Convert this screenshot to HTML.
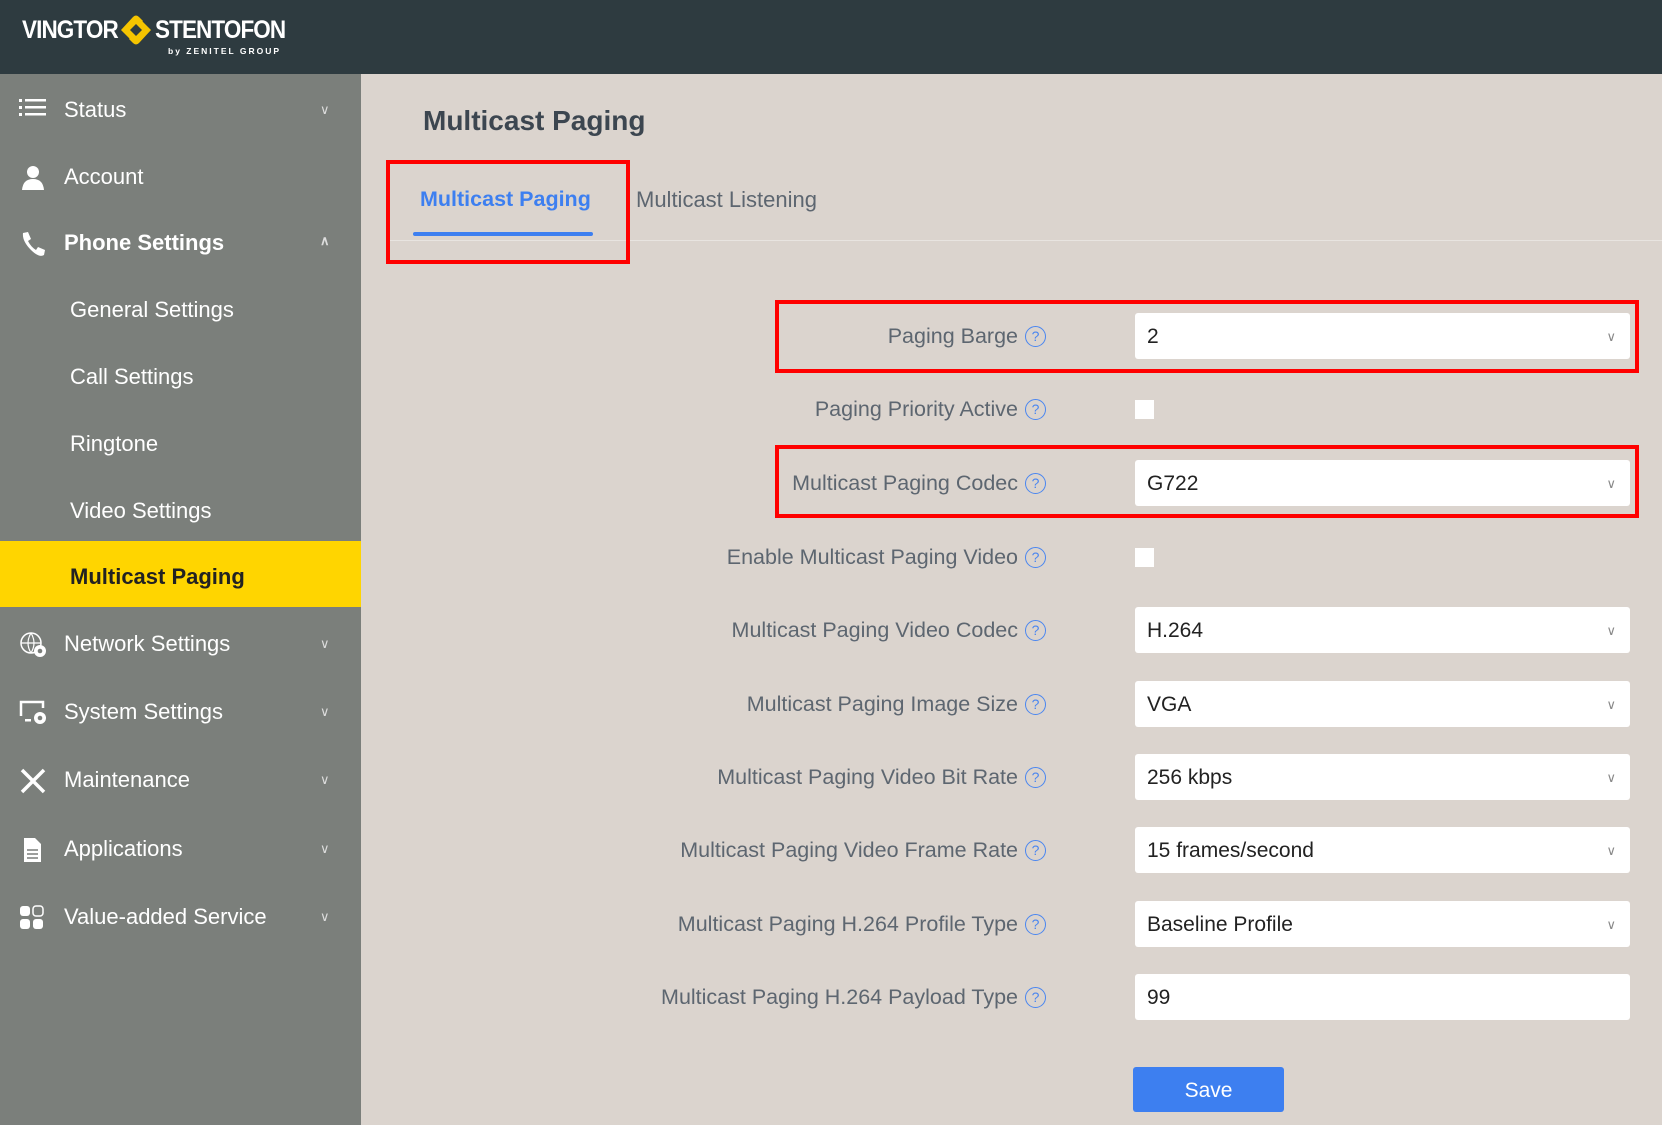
<!DOCTYPE html>
<html><head><meta charset="utf-8"><style>
*{margin:0;padding:0;box-sizing:border-box}
body{width:1662px;height:1125px;overflow:hidden;background:#dbd4ce;font-family:"Liberation Sans",sans-serif;position:relative}
.hdr{position:absolute;left:0;top:0;width:1662px;height:74px;background:#2e3b40}
.side{position:absolute;left:0;top:74px;width:361px;height:1051px;background:#7b7f7b}
.it{position:absolute;left:0;width:361px;color:#fff;font-size:22px;line-height:30px}
.it .t{position:absolute;left:64px}
.it .sub{position:absolute;left:70px}
.it .ch{position:absolute;left:320px;font-size:13px;color:#ddd}
.it svg{position:absolute;left:19px;top:2px}
.lbl{position:absolute;right:644px;color:#5d6670;font-size:21.5px;line-height:26px;text-align:right;white-space:nowrap}
.q{position:absolute;left:1025px;width:21px;height:21px;border:1.6px solid #4a86f0;border-radius:50%;color:#4a86f0;font-size:14px;text-align:center;line-height:18px}
.inp{position:absolute;left:1135px;width:495px;height:46px;background:#fff;border-radius:3px;font-size:21px;color:#222;padding-left:12px;line-height:48px}
.inp .v{position:absolute;right:14px;top:0;font-size:13px;color:#888}
.cb{position:absolute;left:1135px;width:19px;height:19px;background:#fff}
.red{position:absolute;border:4px solid #f00}
</style></head><body>
<div class="hdr">
<div style="position:absolute;left:22px;top:16px;color:#fff;font-weight:bold;font-size:25px;letter-spacing:-1px;transform:scaleX(.9);transform-origin:left">VINGTOR</div>
<svg style="position:absolute;left:118px;top:13px" width="36" height="34" viewBox="0 0 36 34"><path d="M3 17 L15 4 Q18 1 21 4 L25 8 L15 17 L18 20 L12 26 Z" fill="#f5c400"/><path d="M33 17 L21 30 Q18 33 15 30 L11 26 L21 17 L18 14 L24 8 Z" fill="#f5c400"/><path d="M12 17 L18 11 L24 17 L18 23Z" fill="#2e3b40"/></svg>
<div style="position:absolute;left:155px;top:16px;color:#fff;font-weight:bold;font-size:25px;letter-spacing:-1px;transform:scaleX(.9);transform-origin:left">STENTOFON</div>
<div style="position:absolute;left:168px;top:46px;color:#fff;font-size:8.5px;font-weight:bold;letter-spacing:2px">by ZENITEL GROUP</div>
</div>
<div class="side">
<div style="position:absolute;left:0;top:467px;width:361px;height:66px;background:#ffd500"></div>
</div>
<div class="it" style="top:95px"><svg width="28" height="22"><g fill="#fff"><rect x="0" y="2" width="3" height="3"/><rect x="0" y="9" width="3" height="3"/><rect x="0" y="16" width="3" height="3"/><rect x="6" y="2" width="21" height="2.5"/><rect x="6" y="9" width="21" height="2.5"/><rect x="6" y="16" width="21" height="2.5"/></g></svg><span class="t">Status</span><span class="ch">∨</span></div>
<div class="it" style="top:162px"><svg width="28" height="28"><circle cx="14" cy="8" r="6" fill="#fff"/><path d="M3 26 Q4 15 14 15 Q24 15 25 26Z" fill="#fff"/></svg><span class="t">Account</span></div>
<div class="it" style="top:228px;font-weight:bold"><svg width="28" height="28"><path d="M4 3 L9 2 L12 9 L9 11 Q12 17 17 20 L19 17 L26 20 L25 25 Q20 28 12 20 Q3 11 4 3Z" fill="#fff"/></svg><span class="t">Phone Settings</span><span class="ch" style="top:-2px">∧</span></div>
<div class="it" style="top:295px"><span class="sub">General Settings</span></div>
<div class="it" style="top:362px"><span class="sub">Call Settings</span></div>
<div class="it" style="top:429px"><span class="sub">Ringtone</span></div>
<div class="it" style="top:496px"><span class="sub">Video Settings</span></div>
<div class="it" style="top:562px;color:#222;font-weight:bold"><span class="sub">Multicast Paging</span></div>
<div class="it" style="top:629px"><svg width="30" height="28"><circle cx="12" cy="12" r="10" fill="none" stroke="#fff" stroke-width="1.5"/><path d="M2 12H22M12 2Q6 12 12 22M12 2Q18 12 12 22" stroke="#fff" fill="none" stroke-width="1.2"/><circle cx="21" cy="20" r="6" fill="#fff"/><circle cx="21" cy="20" r="2.3" fill="#7b7f7b"/></svg><span class="t">Network Settings</span><span class="ch">∨</span></div>
<div class="it" style="top:697px"><svg width="30" height="28"><path d="M2 17V3H24V9" stroke="#fff" stroke-width="2.5" fill="none"/><rect x="6" y="20" width="6" height="2.5" fill="#fff"/><circle cx="21" cy="19" r="6" fill="#fff"/><circle cx="21" cy="19" r="2.3" fill="#7b7f7b"/></svg><span class="t">System Settings</span><span class="ch">∨</span></div>
<div class="it" style="top:765px"><svg width="28" height="28"><path d="M3 3L25 25M25 3L3 25" stroke="#fff" stroke-width="3.5"/></svg><span class="t">Maintenance</span><span class="ch">∨</span></div>
<div class="it" style="top:834px"><svg width="28" height="28"><path d="M5 2H16L22 8V26H5Z" fill="#fff"/><path d="M8 14H19M8 18H19M8 22H19" stroke="#7b7f7b" stroke-width="1.5"/></svg><span class="t">Applications</span><span class="ch">∨</span></div>
<div class="it" style="top:902px"><svg width="28" height="28"><rect x="1" y="2" width="10" height="10" rx="3" fill="#fff"/><rect x="14" y="2" width="10" height="10" rx="3" fill="none" stroke="#fff" stroke-width="1.5"/><rect x="1" y="15" width="10" height="10" rx="3" fill="#fff"/><rect x="14" y="15" width="10" height="10" rx="3" fill="#fff"/></svg><span class="t">Value-added Service</span><span class="ch">∨</span></div>

<div style="position:absolute;left:423px;top:105px;font-size:28px;color:#3c4650;font-weight:bold">Multicast Paging</div>
<div style="position:absolute;left:386px;top:240px;width:1276px;height:1px;background:#e8e4e0"></div>
<div style="position:absolute;left:420px;top:187px;font-size:21.5px;color:#3d7ff0;font-weight:bold">Multicast Paging</div>
<div style="position:absolute;left:413px;top:232px;width:180px;height:4px;background:#3d7ff0;border-radius:2px"></div>
<div style="position:absolute;left:636px;top:187px;font-size:22px;color:#5d6670">Multicast Listening</div>
<div class="red" style="left:386px;top:160px;width:244px;height:104px"></div>

<div class="lbl" style="top:323px">Paging Barge</div><div class="q" style="top:326px">?</div>
<div class="inp" style="top:313px">2<span class="v">∨</span></div>
<div class="lbl" style="top:396px">Paging Priority Active</div><div class="q" style="top:399px">?</div>
<div class="cb" style="top:400px"></div>
<div class="lbl" style="top:470px">Multicast Paging Codec</div><div class="q" style="top:473px">?</div>
<div class="inp" style="top:460px">G722<span class="v">∨</span></div>
<div class="lbl" style="top:544px">Enable Multicast Paging Video</div><div class="q" style="top:547px">?</div>
<div class="cb" style="top:548px"></div>
<div class="lbl" style="top:617px">Multicast Paging Video Codec</div><div class="q" style="top:620px">?</div>
<div class="inp" style="top:607px">H.264<span class="v">∨</span></div>
<div class="lbl" style="top:691px">Multicast Paging Image Size</div><div class="q" style="top:694px">?</div>
<div class="inp" style="top:681px">VGA<span class="v">∨</span></div>
<div class="lbl" style="top:764px">Multicast Paging Video Bit Rate</div><div class="q" style="top:767px">?</div>
<div class="inp" style="top:754px">256 kbps<span class="v">∨</span></div>
<div class="lbl" style="top:837px">Multicast Paging Video Frame Rate</div><div class="q" style="top:840px">?</div>
<div class="inp" style="top:827px">15 frames/second<span class="v">∨</span></div>
<div class="lbl" style="top:911px">Multicast Paging H.264 Profile Type</div><div class="q" style="top:914px">?</div>
<div class="inp" style="top:901px">Baseline Profile<span class="v">∨</span></div>
<div class="lbl" style="top:984px">Multicast Paging H.264 Payload Type</div><div class="q" style="top:987px">?</div>
<div class="inp" style="top:974px">99</div>

<div class="red" style="left:775px;top:300px;width:864px;height:73px"></div>
<div class="red" style="left:775px;top:445px;width:864px;height:73px"></div>

<div style="position:absolute;left:1133px;top:1067px;width:151px;height:45px;background:#3d7ff0;border-radius:3px;color:#fff;font-size:21px;text-align:center;line-height:47px">Save</div>
</body></html>
